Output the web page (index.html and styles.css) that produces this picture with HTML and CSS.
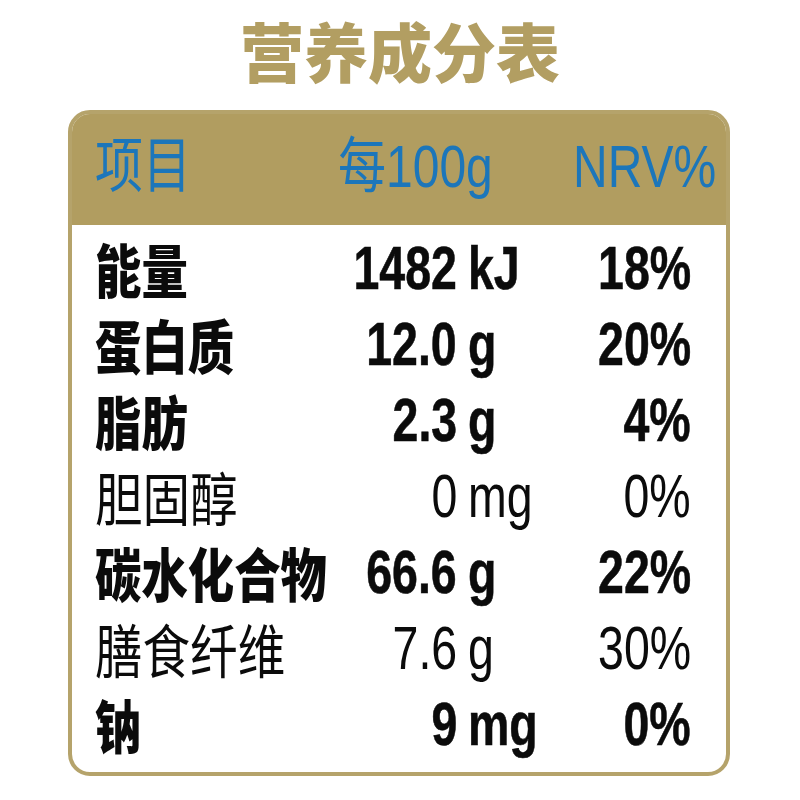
FILE: index.html
```html
<!DOCTYPE html>
<html lang="zh">
<head>
<meta charset="utf-8">
<title>营养成分表</title>
<link rel="stylesheet" href="styles.css">
</head>
<body>
<div class="page">
  <h1 class="title">营养成分表</h1>
  <div class="card">
    <div class="head">
      <span class="hcell"><span class="hq">项目</span></span>
      <span class="hcell"><span class="hq">每100g</span></span>
      <span class="hcell"><span class="hq">NRV%</span></span>
    </div>
    <div class="rows">
      <div class="row bold">
        <span class="name"><span class="cq">能量</span></span>
        <span class="num"><span class="lq r">1482</span></span>
        <span class="unit"><span class="lq">kJ</span></span>
        <span class="pct"><span class="lq r">18%</span></span>
      </div>
      <div class="row bold">
        <span class="name"><span class="cq">蛋白质</span></span>
        <span class="num"><span class="lq r">12.0</span></span>
        <span class="unit"><span class="lq">g</span></span>
        <span class="pct"><span class="lq r">20%</span></span>
      </div>
      <div class="row bold">
        <span class="name"><span class="cq">脂肪</span></span>
        <span class="num"><span class="lq r">2.3</span></span>
        <span class="unit"><span class="lq">g</span></span>
        <span class="pct"><span class="lq r">4%</span></span>
      </div>
      <div class="row">
        <span class="name"><span class="cq">胆固醇</span></span>
        <span class="num"><span class="lq r">0</span></span>
        <span class="unit"><span class="lq">mg</span></span>
        <span class="pct"><span class="lq r">0%</span></span>
      </div>
      <div class="row bold">
        <span class="name"><span class="cq">碳水化合物</span></span>
        <span class="num"><span class="lq r">66.6</span></span>
        <span class="unit"><span class="lq">g</span></span>
        <span class="pct"><span class="lq r">22%</span></span>
      </div>
      <div class="row">
        <span class="name"><span class="cq">膳食纤维</span></span>
        <span class="num"><span class="lq r">7.6</span></span>
        <span class="unit"><span class="lq">g</span></span>
        <span class="pct"><span class="lq r">30%</span></span>
      </div>
      <div class="row bold">
        <span class="name"><span class="cq">钠</span></span>
        <span class="num"><span class="lq r">9</span></span>
        <span class="unit"><span class="lq">mg</span></span>
        <span class="pct"><span class="lq r">0%</span></span>
      </div>
    </div>
  </div>
</div>
</body>
</html>
```

FILE: styles.css
```css
html, body {
  margin: 0;
  padding: 0;
  background: #ffffff;
}

.page {
  width: 800px;
  height: 800px;
  padding: 17px 0 0 68px;
  box-sizing: border-box;
  font-family: "Liberation Sans", "Noto Sans CJK SC", sans-serif;
  color: #0b0b0b;
}

.title {
  margin: 0 0 29px -68px;
  width: 800px;
  height: 64px;
  font-family: "Noto Sans CJK SC", sans-serif;
  font-weight: 900;
  font-size: 64px;
  line-height: 64px;
  text-align: center;
  color: #b29e62;
}

.card {
  width: 662px;
  box-sizing: border-box;
  border: 4px solid #b5a36b;
  border-radius: 22px;
  overflow: hidden;
  background: #ffffff;
}

.head {
  height: 111px;
  box-sizing: border-box;
  background: #b19d60;
  display: grid;
  grid-template-columns: 243px 235px 1fr;
  align-items: center;
  padding: 0 0 6px 23px;
  color: #1c76ba;
  font-size: 60px;
  line-height: 1;
}

.hcell {
  white-space: nowrap;
}

.hq {
  display: inline-block;
  transform: scaleX(0.8);
  transform-origin: left center;
}

.rows {
  padding: 5px 35px 10px 23px;
}

.row {
  height: 76px;
  display: grid;
  grid-template-columns: 200px 162px 83px 151px;
  align-items: center;
  white-space: nowrap;
}

.name {
  font-family: "Noto Sans CJK SC", sans-serif;
  font-size: 58px;
  line-height: 1;
  font-weight: 400;
}

.row.bold .name {
  font-weight: 900;
}

.num, .unit, .pct {
  font-family: "Liberation Sans", sans-serif;
  font-size: 62px;
  line-height: 1;
  font-weight: 400;
}

.row.bold .num, .row.bold .unit, .row.bold .pct {
  font-weight: 700;
  -webkit-text-stroke: 0.6px #0b0b0b;
}

.num, .pct {
  text-align: right;
}

.unit {
  padding-left: 11px;
}

.cq {
  display: inline-block;
  transform: scaleX(0.82);
  transform-origin: left center;
}

.row.bold .cq {
  transform: scaleX(0.8);
}

.lq {
  display: inline-block;
  transform: scaleX(0.75);
  transform-origin: left center;
}

.lq.r {
  transform-origin: right center;
}
```
